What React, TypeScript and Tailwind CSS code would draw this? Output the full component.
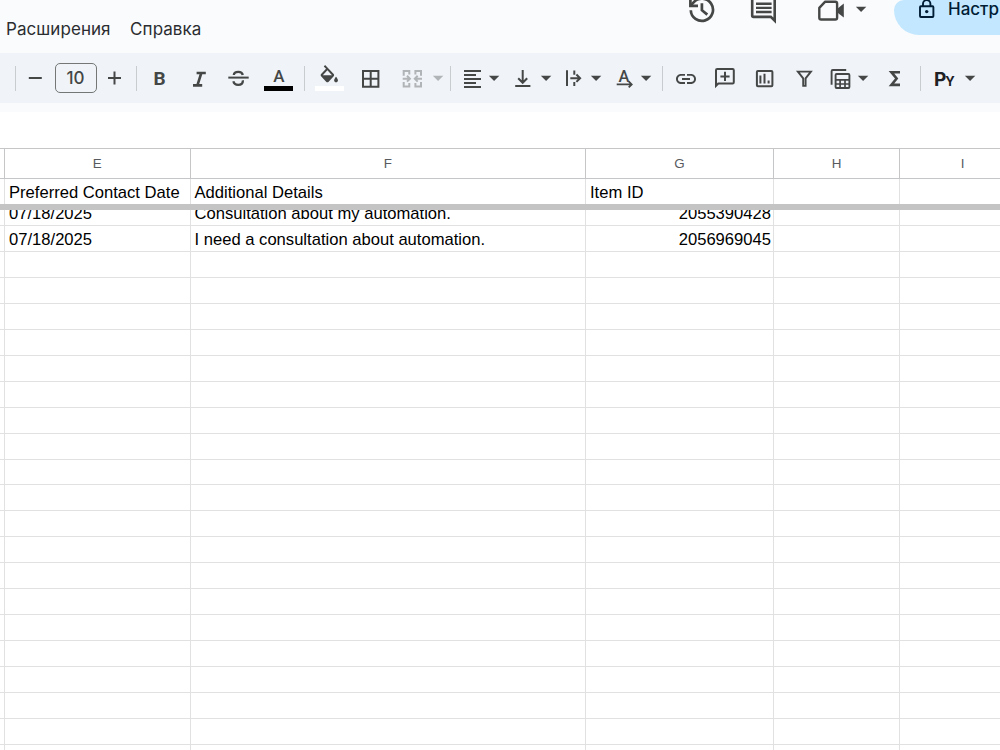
import type { ReactNode } from "react";

function Icon({ children, className = "" }: { children: ReactNode; className?: string }) {
  return (
    <svg
      viewBox="0 0 32 32"
      className={`h-8 w-8 shrink-0 overflow-visible ${className}`}
      fill="none"
      stroke="currentColor"
      strokeWidth="2"
    >
      {children}
    </svg>
  );
}

function Caret({ className = "" }: { className?: string }) {
  return (
    <svg viewBox="0 0 12 12" className={`h-3 w-3 shrink-0 ${className}`} fill="currentColor">
      <path d="M.9 3.8h10.4L6.1 9z" />
    </svg>
  );
}

function Divider({ className = "" }: { className?: string }) {
  return <div className={`h-[25px] w-px shrink-0 bg-[#c9cccf] ${className}`} />;
}

function TopBar() {
  return (
    <header className="flex h-[53px] shrink-0 items-start bg-[#f9fbfd]">
      <nav className="flex w-[687px] shrink-0 gap-[19.5px] pl-[6px] pt-[18px] text-[17px] leading-[22px] tracking-[0.06px] text-[#2b2d30]">
        <span>Расширения</span>
        <span>Справка</span>
      </nav>
      <svg viewBox="0 0 32 26" className="h-[26px] w-8 shrink-0 text-[#444746]" fill="none" stroke="currentColor" strokeWidth="2.7">
        <path d="M3.8 10.2A11.1 11.1 0 1 0 6.6 2.4L4 5.2" />
        <path d="M3.4-2V5.8H11" />
        <path d="M14.9 3.2V10.2L20.3 14.6" />
      </svg>
      <svg viewBox="0 0 32 26" className="ml-[29px] h-[26px] w-8 shrink-0 text-[#444746]" fill="none" stroke="currentColor" strokeWidth="2.6">
        <path d="M4.2-3V15.6Q4.2 16.9 5.5 16.9H22.8L26.7 20.6V-3" />
        <path d="M8 3.7H23.6M8 7.9H23.6M8 12H23.6" strokeWidth="2.4" />
      </svg>
      <svg viewBox="0 0 32 26" className="ml-9 h-[26px] w-8 shrink-0 text-[#444746]" fill="none" stroke="currentColor" strokeWidth="2.4">
        <path d="M9.2 1.7H19.3Q21.1 1.7 21.1 3.5V17.7Q21.1 19.5 19.3 19.5H5.1Q3.3 19.5 3.3 17.7V7.8Z" strokeLinejoin="round" />
        <path d="M21 9L27.8 3.6V17.4L21 12.2Z" fill="currentColor" stroke="none" />
      </svg>
      <Caret className="ml-[7px] mt-[3px] text-[#444746]" />
      <div className="ml-[27px] flex h-[35px] flex-1 overflow-hidden rounded-bl-[25px] rounded-tl-[10px] bg-[#c2e7ff] text-[#001d35]">
        <svg viewBox="0 0 18 20" className="ml-[24px] h-5 w-[18px] shrink-0" fill="none" stroke="currentColor" strokeWidth="1.9">
          <path d="M2.9 6.3H14.5Q15.4 6.3 15.4 7.2V16.1Q15.4 17 14.5 17H2.9Q2 17 2 16.1V7.2Q2 6.3 2.9 6.3ZM5 6V3.8A3.7 3.7 0 0 1 12.4 3.8V6" />
          <circle cx="8.7" cy="11.6" r="1.7" fill="currentColor" stroke="none" />
        </svg>
        <span className="-mt-[2px] ml-3 shrink-0 text-[17px] font-medium leading-[23px]">Настр</span>
      </div>
    </header>
  );
}

function Toolbar() {
  return (
    <div className="flex h-[50px] shrink-0 items-center bg-[#f0f3f8] pl-[15px] text-[#444746]">
      <Divider />
      <Icon className="ml-[3px]">
        <path d="M9.8 16H22.8" />
      </Icon>
      <div className="ml-1 flex h-[30px] w-[42px] shrink-0 items-center justify-center rounded-[5px] border border-[#747775] pr-px text-[17px] font-medium leading-none">
        10
      </div>
      <Icon className="ml-px">
        <path d="M10 16H23M16.5 9.5V22.5" />
      </Icon>
      <Divider className="ml-1.5" />
      <div className="ml-1.5 flex h-8 w-8 shrink-0 items-center justify-center pl-px pt-px font-['Roboto'] text-[19px] font-bold leading-none">
        B
      </div>
      <Icon className="ml-2">
        <path d="M13.6 11H22.8M10 23.4H19.2M18.3 11L14.4 23.4" strokeWidth="2.6" />
      </Icon>
      <Icon className="ml-[7px]">
        <path d="M6.3 15.6H26.7" />
        <path d="M20.8 12.9C20.3 10.8 18.6 9.9 16.3 9.9C13.8 9.9 12 11 11.8 13M11.4 19.3C11.9 21.8 13.7 22.8 16.2 22.8C19 22.8 20.8 21.5 20.8 19.2L20.6 18.4" strokeWidth="2.3" />
      </Icon>
      <div className="relative ml-[9px] flex h-8 w-8 shrink-0 justify-center pt-[6px] font-['Roboto'] text-[17px] font-medium leading-[17px]">
        A
        <div className="absolute left-[1px] top-[24px] h-[5px] w-[29px] bg-black" />
      </div>
      <Divider className="ml-[9px]" />
      <Icon className="ml-2">
        <path
          transform="translate(4.8 3) scale(.96 1.02)"
          fill="currentColor"
          stroke="none"
          d="M16.56 8.94L7.62 0 6.21 1.41l2.38 2.38-5.15 5.15c-.59.59-.59 1.54 0 2.12l5.5 5.5c.29.29.68.44 1.06.44s.77-.15 1.06-.44l5.5-5.5c.59-.58.59-1.53 0-2.12zM5.21 10L10 5.21 14.79 10H5.21zM19 11.5s-2 2.17-2 3.5c0 1.1.9 2 2 2s2-.9 2-2c0-1.33-2-3.5-2-3.5z"
        />
        <path d="M2 26.5H31" stroke="#fff" strokeWidth="5" />
      </Icon>
      <Icon className="ml-[9px]">
        <path d="M9 9H24.4V24.7H9ZM16.7 9V24.7M9 16.8H24.4" />
      </Icon>
      <Icon className="ml-2.5 text-[#b1b4b6]">
        <path d="M7.7 13.7V9H13.3V12.5M7.7 20V24.4H13.3V21M25 13.7V9H19.4V12.5M25 20V24.4H19.4V21" />
        <path d="M6.7 16.7H13.2M11 13.8L13.9 16.7L11 19.6M26 16.7H19.5M21.7 13.8L18.8 16.7L21.7 19.6" />
      </Icon>
      <Caret className="ml-1 text-[#b1b4b6]" />
      <Divider className="ml-1.5" />
      <Icon className="ml-[5px]">
        <path d="M8 9H25M8 13H20M8 17H25M8 21H20M8 25H25" strokeWidth="1.9" />
      </Icon>
      <Caret />
      <Icon className="ml-1.5">
        <path d="M16.7 8V20.5M12.2 16.3L16.7 20.8L21.2 16.3M9.2 24H24.4" />
      </Icon>
      <Caret className="ml-0.5" />
      <Icon className="ml-1.5">
        <path d="M9 8.3V24M16.3 8.5V12.7M16.3 20V24M12.3 16.2H22M18.4 12.5L22.1 16.2L18.4 19.9" />
      </Icon>
      <Caret />
      <div className="relative ml-1.5 flex h-8 w-8 shrink-0 justify-center pt-[6px] font-['Roboto'] text-[16.5px] font-medium leading-[17px]">
        A
        <Icon className="absolute left-0 top-0">
          <path d="M8.7 22.4H22.5M20.7 19.4L23.7 22.4L20.7 25.4" strokeWidth="1.8" />
        </Icon>
      </div>
      <Caret />
      <Divider className="ml-2.5" />
      <Icon className="ml-[7px]">
        <path
          transform="translate(4 4.9)"
          fill="currentColor"
          stroke="none"
          d="M3.9 12c0-1.71 1.39-3.1 3.1-3.1h4V7H7c-2.76 0-5 2.24-5 5s2.24 5 5 5h4v-1.9H7c-1.71 0-3.1-1.39-3.1-3.1zM8 13h8v-2H8v2zm9-6h-4v1.9h4c1.71 0 3.1 1.39 3.1 3.1s-1.39 3.1-3.1 3.1h-4V17h4c2.76 0 5-2.24 5-5s-2.24-5-5-5z"
        />
      </Icon>
      <Icon className="ml-[7px]">
        <path d="M7 23.8V8.2Q7 7 8.2 7H23.6Q24.8 7 24.8 8.2V20.3Q24.8 21.5 23.6 21.5H9.3Z" />
        <path d="M11.4 14.4H20.6M16 9.8V19" />
      </Icon>
      <Icon className="ml-[7px]">
        <rect x="8.9" y="8.9" width="15.5" height="15.3" rx="1" />
        <path d="M12.4 13.6V21.4M16.5 11.7V21.4M20.6 18.6V21.4" />
      </Icon>
      <Icon className="ml-2">
        <path d="M9.9 9.6H22.9L17.6 16.3V23.9H15.2V16.3Z" strokeWidth="1.9" />
      </Icon>
      <Icon className="ml-[5px]">
        <path d="M6.6 22.8V9.2Q6.6 8 7.8 8H21.2M10.6 13V25Q10.6 26 11.6 26H23.4Q24.4 26 24.4 25V13Q24.4 12 23.4 12H11.6Q10.6 12 10.6 13Z" strokeWidth="1.9" />
        <path d="M10.6 17.9H24.4M10.6 22H24.4M15.1 17.9V26M20 17.9V26" strokeWidth="1.7" />
      </Icon>
      <Caret />
      <Icon className="ml-2.5">
        <path d="M21 10.2H12.4L17.6 16.5L12.4 22.9H21" strokeWidth="2.6" />
      </Icon>
      <Divider className="ml-[9px]" />
      <div className="ml-2 flex h-8 w-8 shrink-0 items-baseline pl-[5px] pt-[4px] font-bold text-[#202124]">
        <span className="text-[19px] leading-7">P</span>
        <span className="-ml-px text-[13px] leading-7">Y</span>
      </div>
      <Caret className="ml-[3px]" />
    </div>
  );
}

const columns = "grid grid-cols-[5px_185.5px_395.5px_188px_126px_126px]";
const cell = "border-b border-r border-[#e1e1e1] whitespace-nowrap pt-1";

const records = [
  ["07/18/2025", "Consultation about my automation.", "2055390428"],
  ["07/18/2025", "I need a consultation about automation.", "2056969045"],
  ...Array.from({ length: 20 }, () => ["", "", ""]),
];

function Sheet() {
  return (
    <main className="flex min-h-0 flex-1 flex-col overflow-hidden bg-white pt-9 font-['Liberation_Sans',Arial,sans-serif] text-[16.6px] text-black">
      <div className={`${columns} h-[31px] shrink-0 border-y border-[#c4c6c8] text-center font-['Liberation_Sans'] text-[13.4px] leading-[29px] text-[#575b5f]`}>
        {["", "E", "F", "G", "H", "I"].map((name, i) => (
          <div key={i} className="border-r border-[#c4c6c8]">{name}</div>
        ))}
      </div>
      <div className={`${columns} h-[25px] shrink-0 leading-5`}>
        {["", "Preferred Contact Date", "Additional Details", "Item ID", "", ""].map((title, i) => (
          <div key={i} className="whitespace-nowrap border-r border-[#e1e1e1] pl-1 pt-1">{title}</div>
        ))}
      </div>
      <div className="h-[6px] shrink-0 bg-[#c4c4c4]" />
      <div className="min-h-0 flex-1 overflow-hidden">
        <div className="-mt-[10px]">
          {records.map(([date, details, id], i) => (
            <div key={i} className={`${columns} h-[25.96px] leading-5`}>
              <div className={cell} />
              <div className={`${cell} pl-1`}>{date}</div>
              <div className={`${cell} pl-1`}>{details}</div>
              <div className={`${cell} pr-0.5 text-right`}>{id}</div>
              <div className={cell} />
              <div className={cell} />
            </div>
          ))}
        </div>
      </div>
    </main>
  );
}

export default function App() {
  return (
    <div className="flex h-[750px] w-[1000px] flex-col overflow-hidden bg-[#f9fbfd] font-[Inter,Roboto,sans-serif]">
      <TopBar />
      <Toolbar />
      <div className="h-[9px] shrink-0 bg-[#f9fbfd]" />
      <Sheet />
    </div>
  );
}
